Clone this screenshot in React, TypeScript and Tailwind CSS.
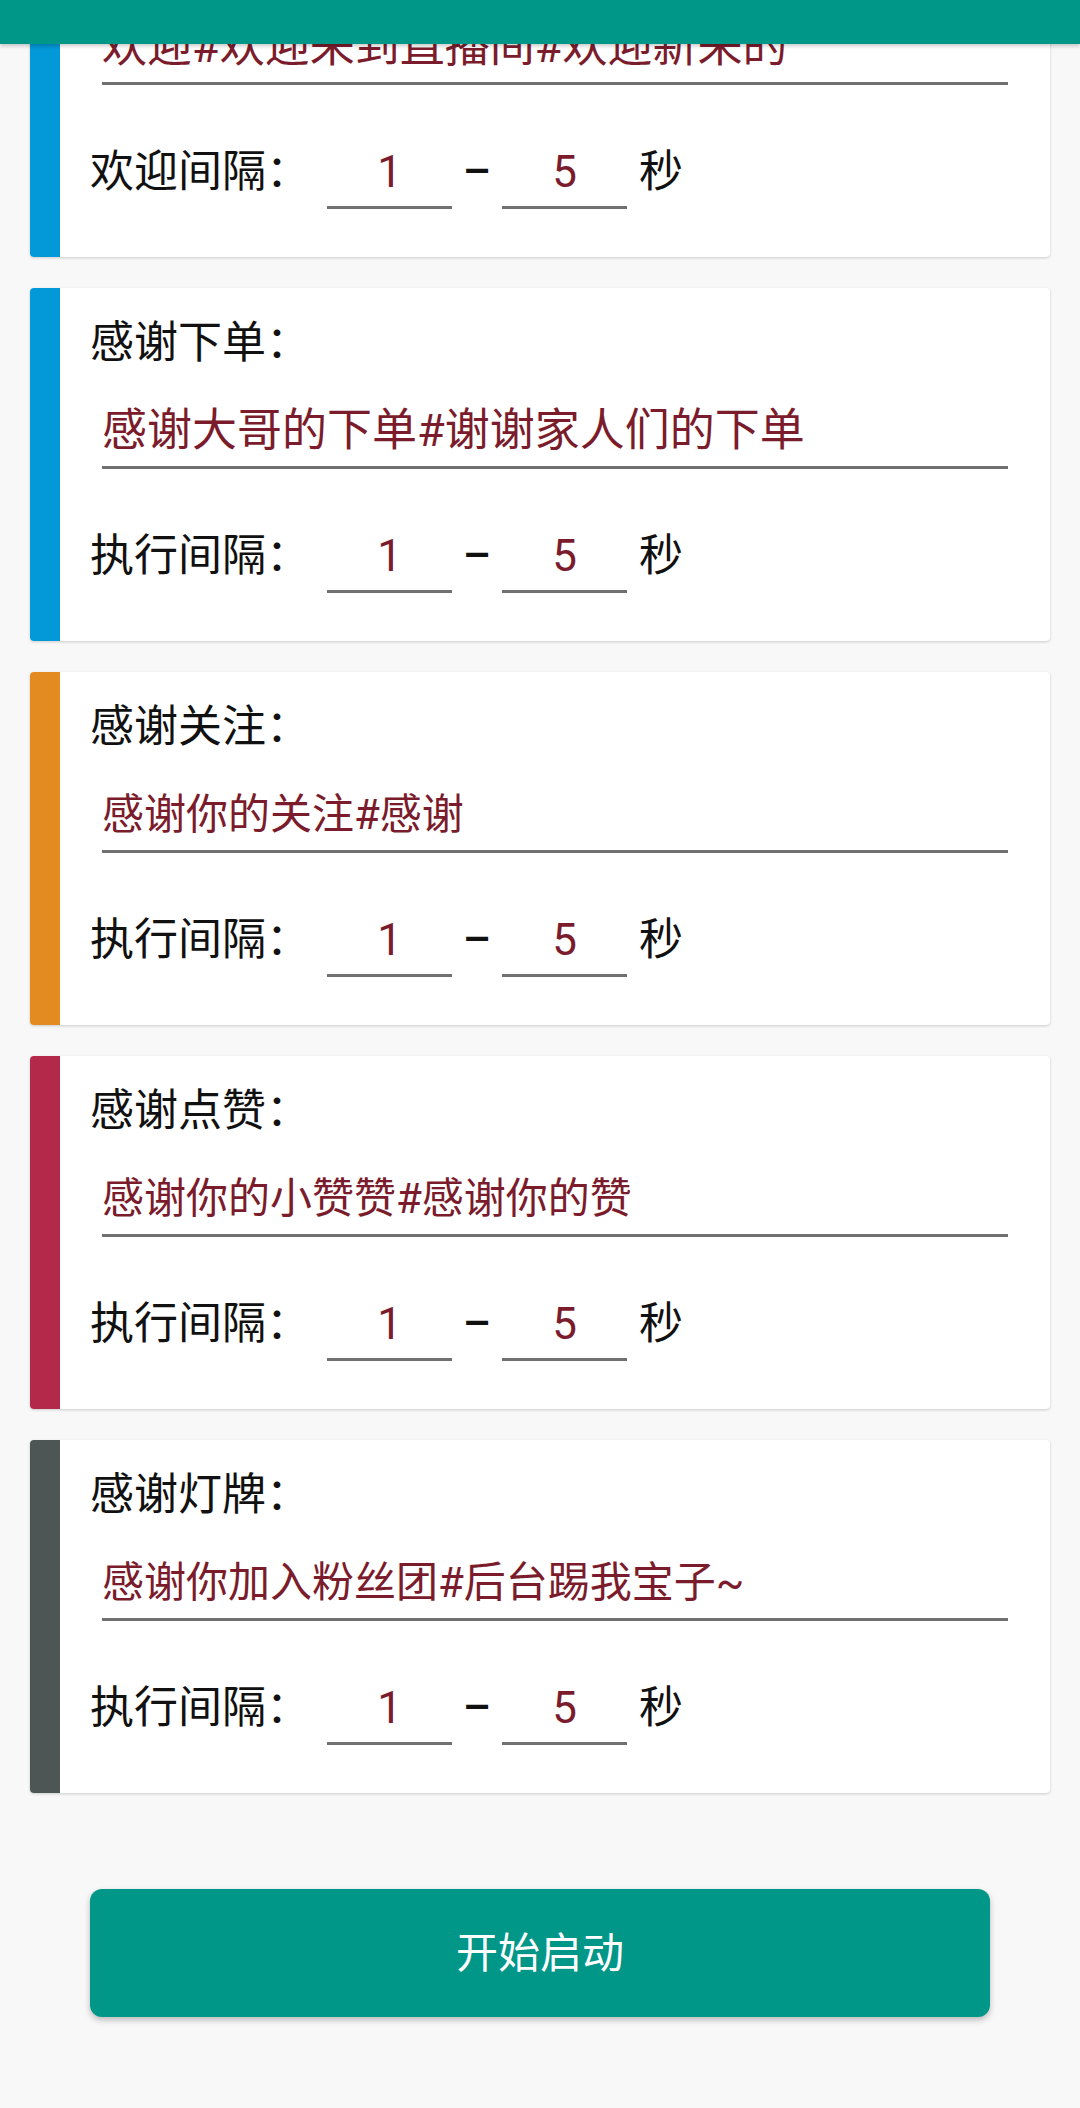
const cards = [
  { title: "欢迎新人：", text: "欢迎#欢迎来到直播间#欢迎新来的", label: "欢迎间隔：", stripe: "bg-[#0399d8]", size: "text-[45px]" },
  { title: "感谢下单：", text: "感谢大哥的下单#谢谢家人们的下单", label: "执行间隔：", stripe: "bg-[#0399d8]", size: "text-[45px]" },
  { title: "感谢关注：", text: "感谢你的关注#感谢", label: "执行间隔：", stripe: "bg-[#e38a20]", size: "text-[42px]" },
  { title: "感谢点赞：", text: "感谢你的小赞赞#感谢你的赞", label: "执行间隔：", stripe: "bg-[#b3294a]", size: "text-[42px]" },
  { title: "感谢灯牌：", text: "感谢你加入粉丝团#后台踢我宝子~", label: "执行间隔：", stripe: "bg-[#4d5655]", size: "text-[42px]" },
];

function NumField({ value }: { value: string }) {
  return (
    <div className="w-[125px] flex flex-col">
      <div className="h-[60px] leading-[60px] text-center text-[#7b1c2c]">{value}</div>
      <div className="mt-[4px] h-[3px] bg-[#707070]" />
    </div>
  );
}

function ReplyCard({ title, text, label, stripe, size }: (typeof cards)[number]) {
  return (
    <div className="flex h-[353px] bg-white rounded-[4px] overflow-hidden shadow-[0_1px_3px_rgba(0,0,0,0.18)]">
      <div className={`w-[30px] shrink-0 ${stripe}`} />
      <div className="flex-1 pl-[30px] pr-[42px] pt-[25px]">
        <div className="h-[60px] leading-[60px] text-[#111]">{title}</div>
        <div className="mt-[28px] pl-[12px]">
          <div className={`h-[60px] leading-[60px] text-[#7b1c2c] whitespace-nowrap ${size}`}>{text}</div>
        </div>
        <div className="mt-[5px] ml-[12px] h-[3px] bg-[#707070]" />
        <div className="mt-[57px] flex items-start text-[#111]">
          <div className="h-[60px] leading-[60px] w-[237px]">{label}</div>
          <NumField value="1" />
          <div className="h-[60px] leading-[60px] w-[50px] text-center font-medium">–</div>
          <NumField value="5" />
          <div className="h-[60px] leading-[60px] ml-[12px]">秒</div>
        </div>
      </div>
    </div>
  );
}

export default function App() {
  return (
    <div
      className="relative w-[1080px] h-[2108px] overflow-hidden bg-[#f8f8f8] text-[44px]"
      style={{ fontFamily: '"Roboto", "Noto Sans CJK SC", sans-serif' }}
    >
      <div className="absolute top-0 left-0 right-0 h-[44px] bg-[#009688] z-10 shadow-[0_2px_4px_rgba(0,0,0,0.22)]" />
      <div className="mt-[-96px] px-[30px] flex flex-col gap-[31px]">
        {cards.map((c, i) => (
          <ReplyCard key={i} {...c} />
        ))}
      </div>
      <div className="mt-[96px] flex justify-center">
        <button className="w-[900px] h-[128px] rounded-[12px] bg-[#009688] text-white text-[42px] shadow-[0_3px_6px_rgba(0,0,0,0.25)]">
          开始启动
        </button>
      </div>
    </div>
  );
}
